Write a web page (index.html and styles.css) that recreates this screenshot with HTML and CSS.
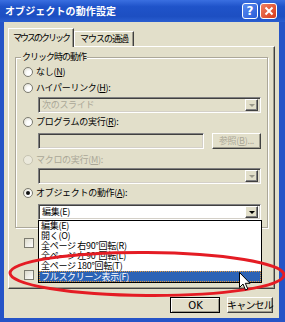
FILE: index.html
```html
<!DOCTYPE html>
<html lang="ja">
<head>
    <meta charset="UTF-8">
    <title>オブジェクトの動作設定</title>
    <link rel="stylesheet" href="styles.css">
</head>
<body>
<div class="window">
    <div class="titlebar">
        <span class="title">オブジェクトの動作設定</span>
        <span class="tb-btn help">?</span>
        <span class="tb-btn close">
            <svg width="10" height="10" viewBox="0 0 10 10"><path d="M1.5 1.5 L8.5 8.5 M8.5 1.5 L1.5 8.5" stroke="#fff" stroke-width="2"/></svg>
        </span>
    </div>
    <div class="client">
        <div class="tabs">
            <div class="tab active">マウスのクリック</div>
            <div class="tab">マウスの通過</div>
        </div>
        <div class="panel">
            <fieldset class="group">
                <legend>クリック時の動作</legend>
                <div class="opt r1"><span class="radio"></span>なし(<u>N</u>)</div>
                <div class="opt r2"><span class="radio"></span>ハイパーリンク(<u>H</u>):</div>
                <div class="combo disabled c1"><span class="val">次のスライド</span><span class="drop"></span></div>
                <div class="opt r3"><span class="radio"></span>プログラムの実行(<u>R</u>):</div>
                <div class="field-row">
                    <div class="field"></div>
                    <div class="btn small disabled">参照(<u>B</u>)...</div>
                </div>
                <div class="opt r4 disabled"><span class="radio"></span>マクロの実行(<u>M</u>):</div>
                <div class="combo disabled c2"><span class="val"></span><span class="drop"></span></div>
                <div class="opt r5"><span class="radio checked"></span>オブジェクトの動作(<u>A</u>):</div>
                <div class="combo c3"><span class="val">編集(E)</span><span class="drop"></span></div>
            </fieldset>
            <div class="chk-row k1"><span class="check"></span></div>
            <div class="chk-row k2"><span class="check"></span></div>
        </div>
        <div class="buttons">
            <div class="btn default">OK</div>
            <div class="btn">キャンセル</div>
        </div>
    </div>

    <ul class="list">
        <li>編集(E)</li>
        <li>開く(O)</li>
        <li>全ページ 右90°回転(R)</li>
        <li>全ページ 左90°回転(L)</li>
        <li>全ページ 180°回転(T)</li>
        <li class="sel">フルスクリーン表示(F)</li>
    </ul>

    <svg class="mark" width="285" height="322" viewBox="0 0 285 322">
        <ellipse cx="147" cy="274" rx="137" ry="21.5" fill="none" stroke="#e41c24" stroke-width="3" transform="rotate(0.4 147 274)"/>
    </svg>

    <svg class="cursor" width="12" height="19" viewBox="0 0 12 19">
        <path d="M0.5 0.5 L0.5 15.5 L4 12 L6.5 18 L8.8 17 L6.3 11.3 L11 11.3 Z" fill="#fff" stroke="#000" stroke-width="1" stroke-linejoin="miter"/>
    </svg>
</div>
</body>
</html>
```

FILE: styles.css
```css
body{
    margin: 0;
    font-family: "Noto Sans CJK JP", "Noto Sans", sans-serif;
    font-size: 9px;
    letter-spacing: -0.3px;
    color: #000;
}
.window{
    position: relative;
    width: 285px;
    height: 322px;
    background: #2554c7;
    display: flex;
    flex-direction: column;
    overflow: hidden;
}
/* title bar */
.titlebar{
    height: 22px;
    flex: none;
    display: flex;
    align-items: center;
    padding: 0 8px 0 5px;
    background: linear-gradient(#3a6fe0, #1f53c9 30%, #1d4fc2 75%, #2a5ed0);
}
.title{
    flex: 1;
    color: #fff;
    font-weight: bold;
    font-size: 10px;
    letter-spacing: 0.1px;
    line-height: 14px;
}
.tb-btn{
    box-sizing: border-box;
    width: 16px;
    height: 16px;
    border: 1px solid #fff;
    border-radius: 3px;
    display: flex;
    align-items: center;
    justify-content: center;
    color: #fff;
    font-family: "DejaVu Sans", sans-serif;
    font-weight: bold;
    font-size: 12px;
    letter-spacing: 0;
}
.help{
    background: linear-gradient(135deg, #5a8cf0, #2a5bd8);
    margin-right: 2px;
}
.close{
    width: 17px;
    background: linear-gradient(135deg, #f08060, #d73a1c);
}
/* client */
.client{
    flex: 1;
    margin: 0 6px 4px 4px;
    padding: 6px 4px 0;
    background: #e2dfca;
    display: flex;
    flex-direction: column;
}
.tabs{
    display: flex;
    align-items: flex-start;
    height: 18px;
    flex: none;
}
.tab{
    box-sizing: border-box;
    height: 15px;
    margin-top: 3px;
    width: 60px;
    border: 1px solid #fff;
    border-right-color: #404040;
    border-bottom: none;
    box-shadow: inset -1px 0 #9c9a8c;
    text-align: center;
    line-height: 14px;
    letter-spacing: -1px;
    background: #e2dfca;
    white-space: nowrap;
}
.tab.active{
    position: relative;
    z-index: 1;
    width: 66px;
    height: 19px;
    margin-top: 0;
    line-height: 17px;
    letter-spacing: -2px;
}
.panel{
    box-sizing: border-box;
    height: 243px;
    flex: none;
    border: 1px solid;
    border-color: #fff #404040 #404040 #fff;
    box-shadow: inset -1px -1px #9c9a8c;
    padding: 4px 6px 0 6px;
}
.group{
    margin: 0;
    padding: 3px 6px 7px 6px;
    border: 1px solid #aca899;
    box-shadow: inset 1px 1px #fff, 1px 1px #fff;
}
.group legend{
    padding: 0 1px;
    margin-left: -1px;
    line-height: 12px;
    letter-spacing: -1px;
    background: #e2dfca;
}
.opt{
    height: 12px;
    line-height: 12px;
    display: flex;
    align-items: center;
    white-space: nowrap;
}
.opt.disabled, .disabled{
    color: #aaa797;
}
.radio{
    box-sizing: border-box;
    width: 10px;
    height: 10px;
    margin: 0 3px 0 1px;
    border-radius: 50%;
    border: 1px solid #7c7b70;
    background: radial-gradient(circle at 65% 65%, #fff 30%, #d8d6c8);
    display: flex;
    align-items: center;
    justify-content: center;
}
.opt.disabled .radio{
    border-color: #c6c3b0;
    background: #ebe9dc;
}
.radio.checked::after{
    content: "";
    width: 4px;
    height: 4px;
    border-radius: 50%;
    background: #111;
}
.r2{ margin-top: 4px; }
.r3, .r5{ margin-top: 3px; }
.r4{ margin-top: 5px; }
.combo{
    box-sizing: border-box;
    height: 16px;
    margin-left: 16px;
    border: 1px solid;
    border-color: #808080 #fff #fff #808080;
    box-shadow: inset 1px 1px #404040, inset -1px -1px #d4d0c8;
    background: #fff;
    display: flex;
    align-items: center;
    padding: 0 2px 0 3px;
}
.combo.disabled{
    background: #e2dfca;
}
.c1{ margin-top: 3px; }
.c2{ margin-top: 2px; }
.c3{ margin-top: 5px; }
.combo .val{
    flex: 1;
    line-height: 12px;
}
.drop{
    box-sizing: border-box;
    width: 13px;
    height: 12px;
    border: 1px solid;
    border-color: #fff #404040 #404040 #fff;
    box-shadow: inset -1px -1px #808080;
    background: #e2dfca;
    display: flex;
    align-items: center;
    justify-content: center;
}
.drop::after{
    content: "";
    border: 3px solid transparent;
    border-top: 3px solid #000;
    border-bottom: none;
    margin-top: 1px;
}
.combo.disabled .drop::after{
    border-top-color: #9a988a;
}
.field-row{
    display: flex;
    margin: 5px 0 0 16px;
    gap: 8px;
}
.field{
    box-sizing: border-box;
    width: 166px;
    height: 16px;
    border: 1px solid;
    border-color: #808080 #fff #fff #808080;
    box-shadow: inset 1px 1px #404040, inset -1px -1px #d4d0c8;
}
.btn{
    box-sizing: border-box;
    height: 16px;
    border: 1px solid;
    border-color: #fff #404040 #404040 #fff;
    box-shadow: inset -1px -1px #9c9a8c;
    display: flex;
    align-items: center;
    justify-content: center;
    line-height: 12px;
    white-space: nowrap;
}
.btn.small{
    width: 49px;
}
.chk-row{
    height: 12px;
    display: flex;
    align-items: center;
    padding-left: 9px;
}
.k1{ margin-top: 9px; }
.k2{ margin-top: 20px; }
.check{
    box-sizing: border-box;
    width: 10px;
    height: 10px;
    border: 1px solid #7c7b70;
    background: linear-gradient(135deg, #dcdacb, #fff);
}
.buttons{
    display: flex;
    justify-content: flex-end;
    gap: 7px;
    margin: 8px 2px 0 0;
}
.buttons .btn{
    width: 46px;
    font-size: 10px;
    letter-spacing: -0.8px;
}
.buttons .btn.default{
    width: 50px;
    outline: 1px solid #000;
    outline-offset: -1px;
    border-width: 2px 1px 1px 2px;
    letter-spacing: 0;
    font-family: "DejaVu Sans", sans-serif;
}
/* open dropdown */
.list{
    position: absolute;
    left: 38px;
    top: 220px;
    width: 224px;
    margin: 0;
    padding: 0;
    list-style: none;
    box-sizing: border-box;
    border: 1px solid #000;
    background: #fff;
}
.list li{
    height: 10px;
    line-height: 10px;
    padding-left: 2px;
    white-space: nowrap;
}
.list li.sel{
    height: 11px;
    line-height: 9px;
    box-sizing: border-box;
    padding-left: 1px;
    background: #2c63b6;
    color: #fff;
    border: 1px dotted #e49a3a;
}
.mark{
    position: absolute;
    left: 0;
    top: 0;
}
.cursor{
    position: absolute;
    left: 239px;
    top: 272px;
}
```
